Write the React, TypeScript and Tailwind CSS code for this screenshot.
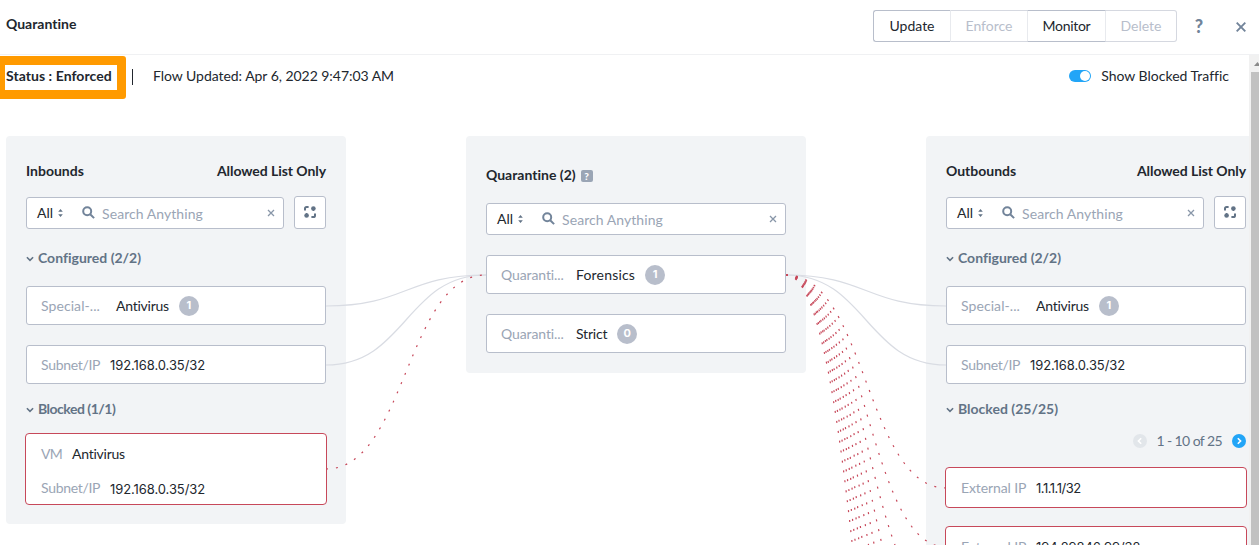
import React from "react";

const outboundTargets = [488, 547, 606, 665, 724, 783, 860, 919, 1000, 1081];

const links = [
  { d: "M326,306 C406,306 406,275 486,275", blocked: false },
  { d: "M326,365 C406,365 406,275 486,275", blocked: false },
  { d: "M326,469 C406,469 406,275 486,275", blocked: true },
  { d: "M786,275 C866,275 866,306 946,306", blocked: false },
  { d: "M786,275 C866,275 866,365 946,365", blocked: false },
  ...outboundTargets.map((y) => ({ d: `M786,275 C866,275 866,${y} 946,${y}`, blocked: true })),
];

function Links() {
  return (
    <svg className="pointer-events-none absolute left-0 top-0" width="1249" height="545" viewBox="0 0 1249 545" fill="none">
      {links.map((l) => (
        <path key={l.d} d={l.d} stroke={l.blocked ? "#c7485a" : "#d9dce3"} strokeWidth={1.2} strokeDasharray={l.blocked ? "2 8" : undefined} />
      ))}
    </svg>
  );
}

function Caret({ className }: { className: string }) {
  return (
    <svg className={className} width="8" height="6" viewBox="0 0 8 6" fill="none" stroke="#627386" strokeWidth="1.6">
      <path d="M0.9 1.2 4 4.3 7.1 1.2" />
    </svg>
  );
}

function SearchBox({ className }: { className: string }) {
  return (
    <div className={`flex h-8 items-center rounded-[3px] border border-[#b8becb] bg-white pl-2.5 pr-2 ${className}`}>
      <span className="text-[#22272e]">All</span>
      <svg className="ml-[5px]" width="5" height="8" viewBox="0 0 5 8" fill="#627386">
        <path d="M2.5 0 4.8 2.7H0.2zM2.5 8 0.2 5.3H4.8z" />
      </svg>
      <svg className="-mt-px ml-[19px]" width="13" height="13" viewBox="0 0 13 13" fill="none" stroke="#72849a" strokeWidth="2">
        <circle cx="5.2" cy="5.2" r="4" />
        <path d="m8.2 8.2 3.9 3.9" />
      </svg>
      <span className="ml-[7px] mt-px flex-1 tracking-[0.06px] text-[#9aa5b5]">Search Anything</span>
      <svg width="8" height="8" viewBox="0 0 8 8" fill="none" stroke="#8896a8" strokeWidth="1.3">
        <path d="m1 1 6 6M7 1 1 7" />
      </svg>
    </div>
  );
}

function ExpandButton() {
  return (
    <button className="-mt-px ml-2.5 flex h-[33px] w-8 items-center justify-center rounded-[3px] border border-[#b8becb] bg-white pb-px">
      <svg width="12" height="12" viewBox="0 0 12 12" fill="none" stroke="#627386" strokeWidth="2">
        <path d="M1 4.6V2.6Q1 1 2.6 1H4.6M11 7.4V9.4Q11 11 9.4 11H7.4" />
        <circle cx="9.4" cy="2.5" r="2.3" fill="#627386" stroke="none" />
        <circle cx="2.6" cy="9.5" r="2.3" fill="#627386" stroke="none" />
        <path d="M9.4 2.5V5M2.6 9.5V7" strokeWidth="1.4" />
      </svg>
    </button>
  );
}

function Section({ text, className, textClass = "" }: { text: string; className: string; textClass?: string }) {
  return (
    <div className={`flex h-5 items-center text-[#627386] ${className}`}>
      <Caret className="mt-0.5" />
      <span className={`ml-1 font-bold ${textClass}`}>{text}</span>
    </div>
  );
}

function Row({ label, labelClass, value, valueClass = "", count, className }: { label: string; labelClass: string; value: string; valueClass?: string; count?: number; className: string }) {
  return (
    <div className={`flex items-center ${className}`}>
      <span className={`shrink-0 text-[#9aa5b5] ${labelClass}`}>{label}</span>
      <span className={`text-[#22272e] ${valueClass}`}>{value}</span>
      {count !== undefined && (
        <span className="ml-2.5 flex size-5 items-center justify-center rounded-full bg-[#b8becb] font-['Inter',sans-serif] text-[11px] font-bold leading-none text-white">{count}</span>
      )}
    </div>
  );
}

const card = "h-[39px] rounded-[3px] border border-[#b8becb] bg-white pl-3.5";
const ip = "font-['Inter',sans-serif] text-[13px] tracking-[-0.08px]";

function SidePanel({ title, children, className }: { title: string; children: React.ReactNode; className: string }) {
  return (
    <section className={`shrink-0 rounded bg-[#f2f4f6] px-5 pt-[25px] ${className}`}>
      <div className="flex h-5 items-center justify-between font-bold text-[#22272e]">
        <h2>{title}</h2>
        <span className="tracking-[-0.06px]">Allowed List Only</span>
      </div>
      <div className="mt-4 flex">
        <SearchBox className="w-[258px]" />
        <ExpandButton />
      </div>
      <Section text="Configured (2/2)" className="mt-[19px]" />
      <Row className={`mt-[18px] ${card}`} label="Special-..." labelClass="w-[75px] tracking-[0.08px]" value="Antivirus" valueClass="tracking-[-0.25px]" count={1} />
      <Row className={`mt-5 ${card}`} label="Subnet/IP" labelClass="w-[69px] tracking-[-0.3px]" value="192.168.0.35/32" valueClass={ip} />
      {children}
    </section>
  );
}

function Pager() {
  return (
    <div className="mt-[15px] flex h-3.5 items-center justify-end text-[#627386]">
      <svg width="14" height="14" viewBox="0 0 14 14" fill="none" stroke="#fff" strokeWidth="1.6">
        <circle cx="7" cy="7" r="7" fill="#e2e6ea" stroke="none" />
        <path d="M8.2 4.2 5.4 7l2.8 2.8" />
      </svg>
      <span className="ml-[9px] mr-2.5 tracking-[-0.58px]">1 - 10 of 25</span>
      <svg width="14" height="14" viewBox="0 0 14 14" fill="none" stroke="#fff" strokeWidth="1.6">
        <circle cx="7" cy="7" r="7" fill="#22a5f7" stroke="none" />
        <path d="M5.8 4.2 8.6 7 5.8 9.8" />
      </svg>
    </div>
  );
}

const redCard = "-mx-px rounded border border-[#c7485a] bg-white pl-[15px]";

export default function App() {
  return (
    <div className="flex h-[545px] w-[1259px] flex-col overflow-hidden bg-white font-['Lato','Liberation_Sans',sans-serif] text-[14px] leading-5 text-[#22272e] [font-variant-ligatures:none]">
      <header className="flex h-[55px] shrink-0 items-center border-b border-[#f0f1f3] pb-1 pl-1.5 pr-[13px]">
        <h1 className="-mt-0.5 flex-1 font-bold">Quarantine</h1>
        <div className="mt-0.5 flex h-8 items-stretch text-center">
          <button className="w-[78px] rounded-l-[3px] border border-r-[#e8eaee] border-[#b8becb]">Update</button>
          <button className="w-[76px] border-y border-[#d5d8e0] text-[#b8becb]">Enforce</button>
          <button className="w-[79px] border-x border-y border-x-[#e8eaee] border-y-[#b8becb] tracking-[-0.3px]">Monitor</button>
          <button className="w-[71px] rounded-r-[3px] border border-l-0 border-[#d5d8e0] text-[#b8becb]">Delete</button>
        </div>
        <span className="ml-4 mt-px w-3 text-center text-[18px] font-black text-[#72849a]">?</span>
        <svg className="ml-[31px] mt-1" width="10" height="10" viewBox="0 0 10 10" fill="none" stroke="#72849a" strokeWidth="1.9">
          <path d="m.7.7 8.6 8.6M9.3.7.7 9.3" />
        </svg>
      </header>

      <div className="flex min-h-0 flex-1">
        <div className="flex w-[1249px] shrink-0 flex-col">
          <div className="mt-px flex h-[43px] items-center">
            <div className="flex h-[43px] w-[126px] items-center rounded-r-[3px] border-y-9 border-l-5 border-r-9 border-[#ff9a00] pb-1 pl-px">
              <span className="whitespace-nowrap font-bold tracking-[0.05px]">Status : Enforced</span>
            </div>
            <span className="-mt-0.5 ml-1.5 h-4 w-px bg-[#22272e]" />
            <span className="-mt-1 ml-5 flex-1 tracking-[-0.04px]">Flow Updated: Apr 6, 2022 9:47:03 AM</span>
            <span className="-mt-1 flex h-3 w-[22px] items-center justify-end rounded-full bg-[#22a5f7] p-px">
              <span className="size-2.5 rounded-full bg-white" />
            </span>
            <span className="-mt-1 ml-2.5 mr-5">Show Blocked Traffic</span>
          </div>

          <main className="mt-[37px] flex items-start overflow-hidden pl-1.5">
            <SidePanel title="Inbounds" className="h-[388px] w-[340px]">
              <Section text="Blocked (1/1)" className="mt-[15px]" textClass="tracking-[-0.5px]" />
              <div className={`mt-3.5 h-[72px] pt-2.5 ${redCard}`}>
                <Row className="h-5" label="VM" labelClass="w-[31px] tracking-[-0.8px]" value="Antivirus" valueClass="tracking-[-0.25px]" />
                <Row className="mt-3.5 h-5" label="Subnet/IP" labelClass="w-[69px] tracking-[-0.3px]" value="192.168.0.35/32" valueClass={`pt-px ${ip}`} />
              </div>
            </SidePanel>

            <section className="ml-[120px] h-[237px] w-[340px] shrink-0 rounded bg-[#f2f4f6] px-5 pt-[29px]">
              <div className="flex h-5 items-center">
                <h2 className="font-bold">Quarantine (2)</h2>
                <span className="ml-[5px] mt-0.5 flex size-3 items-center justify-center rounded-[2px] bg-[#9aa5b5] text-[10px] font-black leading-none text-white">?</span>
              </div>
              <SearchBox className="mt-[18px] w-full" />
              <Row className={`mt-5 ${card}`} label="Quaranti..." labelClass="w-[75px] tracking-[-0.1px]" value="Forensics" valueClass="tracking-[0.18px]" count={1} />
              <Row className={`mt-5 ${card}`} label="Quaranti..." labelClass="w-[75px] tracking-[-0.1px]" value="Strict" valueClass="tracking-[-0.2px]" count={0} />
            </section>

            <SidePanel title="Outbounds" className="ml-[120px] h-[1010px] w-[340px]">
              <Section text="Blocked (25/25)" className="mt-[15px]" />
              <Pager />
              <Row className={`mt-[19px] h-[41px] ${redCard}`} label="External IP" labelClass="w-[75px] tracking-[-0.1px]" value="1.1.1.1/32" valueClass="font-['Inter',sans-serif] text-[13px] tracking-[-0.5px]" />
              <Row className={`mt-[18px] h-[41px] ${redCard}`} label="External IP" labelClass="w-[75px] tracking-[-0.1px]" value="194.29846.99/32" valueClass={ip} />
            </SidePanel>
          </main>
        </div>

        <div className="flex w-2.5 flex-col bg-[#f1f1f1]">
          <svg className="ml-[5px] mt-[7px] shrink-0" width="5" height="4" viewBox="0 0 5 4" fill="#8a8a8a">
            <path d="M0 4 3.5 0 7 4z" />
          </svg>
          <div className="ml-0.5 mt-1.5 flex-1 bg-[#c1c1c1]" />
        </div>
      </div>
      <Links />
    </div>
  );
}
